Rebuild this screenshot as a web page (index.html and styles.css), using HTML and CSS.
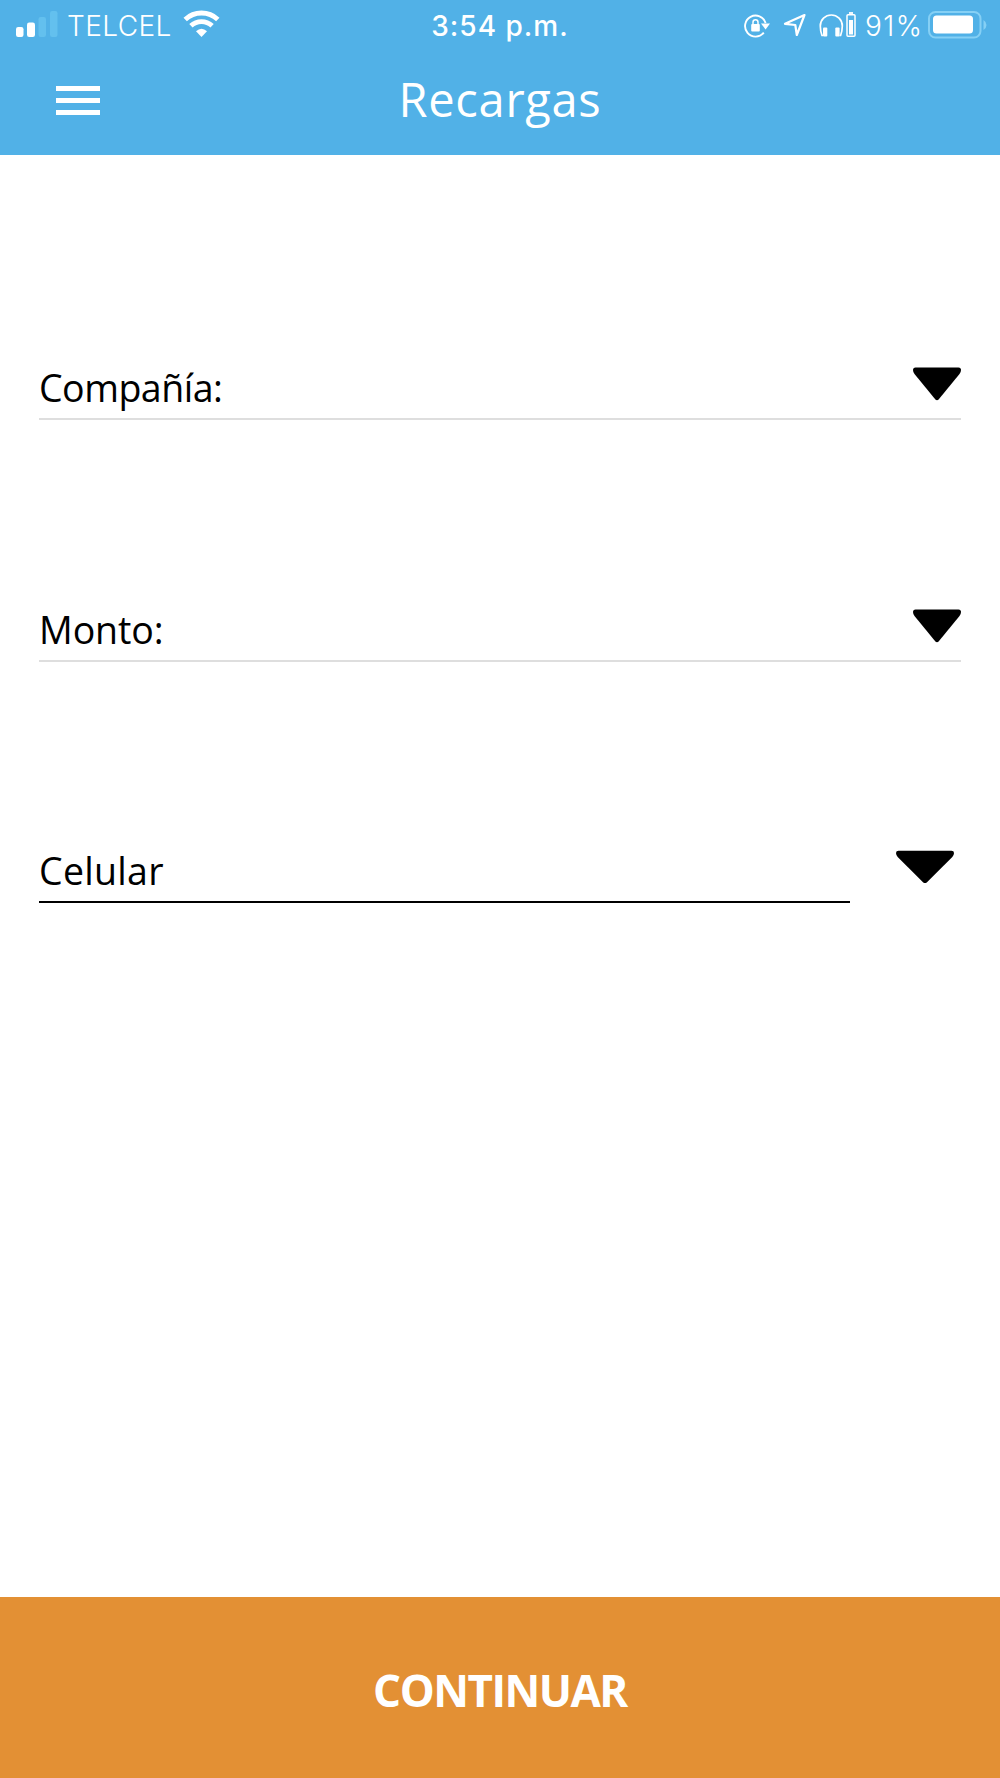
FILE: index.html
```html
<!DOCTYPE html>
<html lang="es">
<head>
  <meta charset="UTF-8" />
  <meta name="viewport" content="width=device-width, initial-scale=1.0" />
  <title>Recargas</title>
  <link rel="stylesheet" href="styles.css">
</head>
<body>
  <header class="header">
    <!-- Status bar -->
    <div class="status-bar">
      <div class="status-left">
        <svg class="signal" width="42" height="26" viewBox="0 0 42 26" fill="#fff">
          <rect x="0" y="16" width="7.5" height="10" rx="2.2" />
          <rect x="11" y="11.5" width="8" height="14.5" rx="2.2" />
          <rect x="22.5" y="6" width="7.5" height="20" rx="2.2" fill="#63c0ee" />
          <rect x="34" y="0" width="7.5" height="26" rx="2.2" fill="#63c0ee" />
        </svg>
        <span class="carrier">TELCEL</span>
        <svg class="wifi" width="38" height="28" viewBox="0 0 38 28" fill="none" stroke="#fff">
          <path d="M2.2 10.5 A24 24 0 0 1 34.8 10.5" stroke-width="5" />
          <path d="M7.9 16.8 A15.5 15.5 0 0 1 29.1 16.8" stroke-width="4.8" />
          <path d="M18.5 28 L13 22.3 Q18.5 17.3 24 22.3 Z" fill="#fff" stroke="none" />
        </svg>
      </div>
      <div class="time">3:54 p.m.</div>
      <div class="status-right">
        <svg class="lock" width="26" height="24" viewBox="0 0 26 24" fill="none" stroke="#fff" stroke-width="1.9">
          <path d="M21.6 9 A10.5 10.5 0 1 0 19.8 18.6" />
          <path d="M17 9.5 H26 L21.6 15.5 Z" fill="#fff" stroke="none" />
          <rect x="7.2" y="10" width="8.6" height="7.5" rx="1" fill="#fff" stroke="none" />
          <path d="M9 11 V8.3 A2.5 2.5 0 0 1 14 8.3 V11" stroke-width="1.5" />
        </svg>
        <svg class="location" width="24" height="24" viewBox="0 0 24 24" fill="none" stroke="#fff" stroke-width="2.2" stroke-linejoin="round">
          <path d="M21.5 2 L2 10.8 L12.3 12 L13.8 22 Z" />
        </svg>
        <svg class="headphones" width="37" height="26" viewBox="0 0 37 26" fill="none" stroke="#fff">
          <path d="M4 23.5 H3 Q1.3 19 1.3 14 A11 11 0 0 1 23.3 14 Q23.3 19 21.6 23.5 H20.5" stroke-width="1.7" />
          <rect x="4" y="15.5" width="4.3" height="9" rx="1" fill="#fff" stroke="none" />
          <rect x="16.3" y="15.5" width="4.3" height="9" rx="1" fill="#fff" stroke="none" />
          <rect x="28" y="2.8" width="8" height="21.5" rx="1" stroke-width="1.5" />
          <path d="M30 1 H34" stroke-width="1.8" />
          <rect x="30" y="8" width="4" height="14.5" fill="#fff" stroke="none" />
        </svg>
        <span class="percent">91%</span>
        <svg class="battery" width="60" height="28" viewBox="0 0 60 28">
          <rect x="1" y="1" width="51.5" height="25.5" rx="6.5" fill="none" stroke="#85d0f5" stroke-width="2" />
          <rect x="5" y="4.5" width="40" height="18" rx="3.5" fill="#fff" />
          <path d="M55.5 9 Q58.5 11 58.5 14 Q58.5 17 55.5 19 Z" fill="#85d0f5" />
        </svg>
      </div>
    </div>

    <!-- Title bar -->
    <div class="nav-bar">
      <div class="menu-icon">
        <span></span>
        <span></span>
        <span></span>
      </div>
      <h1>Recargas</h1>
    </div>
  </header>

  <main class="form">
    <div class="field">
      <span class="label company">Compañía:</span>
      <svg class="arrow" width="48" height="34" viewBox="0 0 48 34">
        <path d="M2.5 .5 H45.5 Q48 .5 48 3 Q48 5 46.5 7 L25.6 32.5 Q24 34 22.4 32.5 L1.5 7 Q0 5 0 3 Q0 .5 2.5 .5 Z" />
      </svg>
    </div>
    <div class="field">
      <span class="label amount">Monto:</span>
      <svg class="arrow" width="48" height="34" viewBox="0 0 48 34">
        <path d="M2.5 .5 H45.5 Q48 .5 48 3 Q48 5 46.5 7 L25.6 32.5 Q24 34 22.4 32.5 L1.5 7 Q0 5 0 3 Q0 .5 2.5 .5 Z" />
      </svg>
    </div>
    <div class="field-row">
      <div class="field phone">
        <span class="label cell">Celular</span>
      </div>
      <svg class="arrow" width="58" height="34" viewBox="0 0 58 34">
        <path d="M2.5 .8 H55.5 Q58 .8 58 3 Q58 5 56.3 7 L31 32.2 Q29 34 27 32.2 L1.7 7 Q0 5 0 3 Q0 .8 2.5 .8 Z" />
      </svg>
    </div>
  </main>

  <button class="continue-btn">CONTINUAR</button>
</body>
</html>
```
FILE: styles.css
```css
* {
  margin: 0;
  padding: 0;
  box-sizing: border-box;
}

body {
  display: flex;
  flex-direction: column;
  height: 1778px;
  background: #fff;
  font-family: 'Open Sans', sans-serif;
  overflow: hidden;
}

/* Header */
.header {
  height: 155px;
  background: #51b1e7;
  color: #fff;
}

.status-bar {
  display: grid;
  grid-template-columns: 1fr auto 1fr;
  height: 50px;
  padding: 0 13px 0 16px;
  font-family: Inter, sans-serif;
  font-size: 28px;
  line-height: 52px;
}

.status-left,
.status-right {
  display: flex;
  align-items: flex-start;
}

.status-right {
  justify-content: flex-end;
}

.signal {
  margin-top: 11px;
}

.carrier {
  width: 106px;
  margin-left: 9px;
  font-weight: 300;
  letter-spacing: 0.4px;
}

.wifi {
  margin: 9px 0 0 10px;
}

.time {
  margin-right: 3px;
  font-weight: 500;
  letter-spacing: 1px;
}

.lock {
  margin: 14px 13px 0 0;
}

.location {
  margin: 13px 12px 0 0;
}

.headphones {
  margin: 12px 9px 0 0;
}

.percent {
  width: 57px;
  margin-right: 6px;
  font-weight: 300;
  letter-spacing: 1.4px;
  white-space: nowrap;
}

.battery {
  margin: 11px -1px 0 0;
}

.nav-bar {
  display: grid;
  grid-template-columns: 1fr auto 1fr;
  height: 105px;
}

.menu-icon {
  display: flex;
  flex-direction: column;
  gap: 7px;
  padding: 36px 0 0 55.5px;
}

.menu-icon span {
  width: 44px;
  height: 5px;
  background: #fff;
}

h1 {
  font-size: 47px;
  font-weight: 400;
  letter-spacing: 0.7px;
  line-height: 98px;
}

/* Form */
.form {
  flex: 1;
  display: flex;
  flex-direction: column;
  gap: 171.5px;
  padding: 195px 39px 0;
}

.field {
  display: flex;
  justify-content: space-between;
  height: 70px;
  border-bottom: 2px solid #dedede;
}

.field .arrow {
  margin-top: 17px;
}

.label {
  color: #000;
  font-size: 37.5px;
  line-height: 76px;
  white-space: nowrap;
}

.company {
  letter-spacing: -0.5px;
}

.amount {
  letter-spacing: -0.1px;
}

.cell {
  letter-spacing: 0.3px;
}

.field-row {
  display: flex;
}

.phone {
  width: 811px;
  border-bottom-color: #000;
}

.field-row > .arrow {
  margin: 17px 0 0 46px;
}

/* Bottom button */
.continue-btn {
  height: 181px;
  padding-top: 4px;
  border: none;
  background: #e39034;
  color: #fff;
  font-family: inherit;
  font-size: 44px;
  font-weight: 700;
  letter-spacing: -1.5px;
}
```
